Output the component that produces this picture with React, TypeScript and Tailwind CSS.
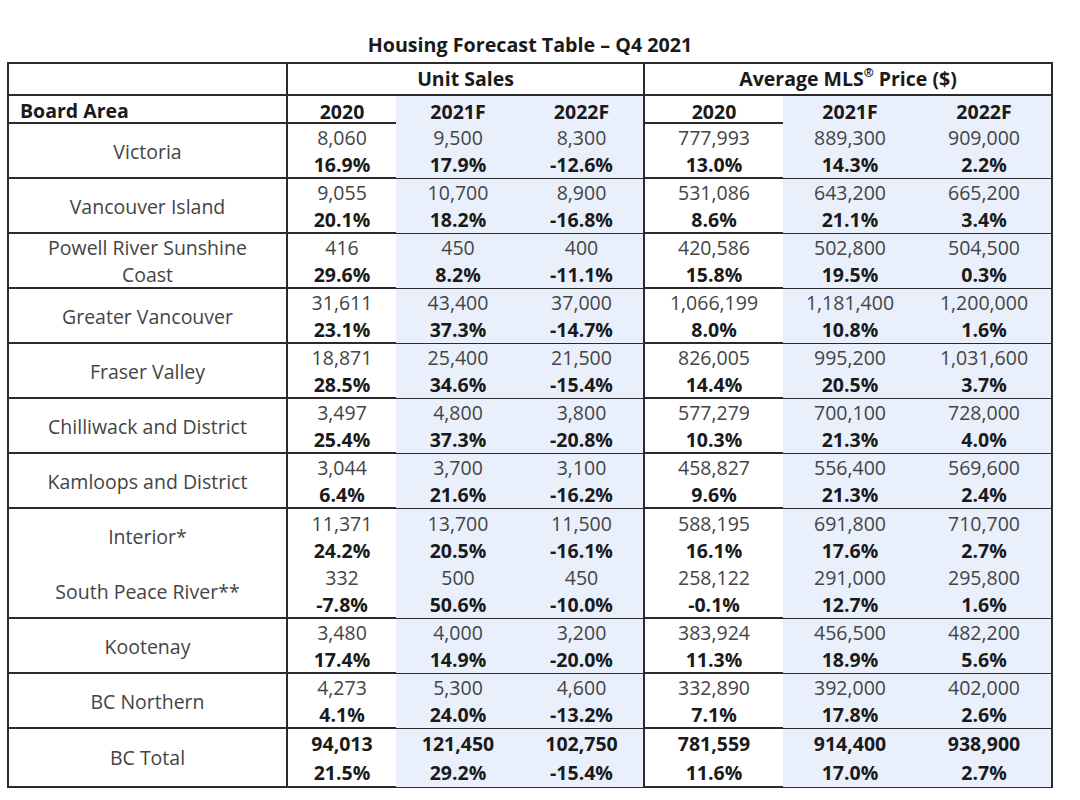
const rows = [
  { name: ["Victoria"], sales: ["8,060", "9,500", "8,300"], salesPct: ["16.9%", "17.9%", "-12.6%"], price: ["777,993", "889,300", "909,000"], pricePct: ["13.0%", "14.3%", "2.2%"] },
  { name: ["Vancouver Island"], sales: ["9,055", "10,700", "8,900"], salesPct: ["20.1%", "18.2%", "-16.8%"], price: ["531,086", "643,200", "665,200"], pricePct: ["8.6%", "21.1%", "3.4%"] },
  { name: ["Powell River Sunshine", "Coast"], sales: ["416", "450", "400"], salesPct: ["29.6%", "8.2%", "-11.1%"], price: ["420,586", "502,800", "504,500"], pricePct: ["15.8%", "19.5%", "0.3%"] },
  { name: ["Greater Vancouver"], sales: ["31,611", "43,400", "37,000"], salesPct: ["23.1%", "37.3%", "-14.7%"], price: ["1,066,199", "1,181,400", "1,200,000"], pricePct: ["8.0%", "10.8%", "1.6%"] },
  { name: ["Fraser Valley"], sales: ["18,871", "25,400", "21,500"], salesPct: ["28.5%", "34.6%", "-15.4%"], price: ["826,005", "995,200", "1,031,600"], pricePct: ["14.4%", "20.5%", "3.7%"] },
  { name: ["Chilliwack and District"], sales: ["3,497", "4,800", "3,800"], salesPct: ["25.4%", "37.3%", "-20.8%"], price: ["577,279", "700,100", "728,000"], pricePct: ["10.3%", "21.3%", "4.0%"] },
  { name: ["Kamloops and District"], sales: ["3,044", "3,700", "3,100"], salesPct: ["6.4%", "21.6%", "-16.2%"], price: ["458,827", "556,400", "569,600"], pricePct: ["9.6%", "21.3%", "2.4%"] },
  { name: ["Interior*"], sales: ["11,371", "13,700", "11,500"], salesPct: ["24.2%", "20.5%", "-16.1%"], price: ["588,195", "691,800", "710,700"], pricePct: ["16.1%", "17.6%", "2.7%"], joined: true },
  { name: ["South Peace River**"], sales: ["332", "500", "450"], salesPct: ["-7.8%", "50.6%", "-10.0%"], price: ["258,122", "291,000", "295,800"], pricePct: ["-0.1%", "12.7%", "1.6%"] },
  { name: ["Kootenay"], sales: ["3,480", "4,000", "3,200"], salesPct: ["17.4%", "14.9%", "-20.0%"], price: ["383,924", "456,500", "482,200"], pricePct: ["11.3%", "18.9%", "5.6%"] },
  { name: ["BC Northern"], sales: ["4,273", "5,300", "4,600"], salesPct: ["4.1%", "24.0%", "-13.2%"], price: ["332,890", "392,000", "402,000"], pricePct: ["7.1%", "17.8%", "2.6%"] },
];

const total = {
  sales: ["94,013", "121,450", "102,750"],
  salesPct: ["21.5%", "29.2%", "-15.4%"],
  price: ["781,559", "914,400", "938,900"],
  pricePct: ["11.6%", "17.0%", "2.7%"],
};

// per value column: blue band on the forecast years, divider after unit sales
const colClass = [
  "",
  "bg-[#e9f0fc]",
  "bg-[#e9f0fc] border-r-2 border-[#2b2b2b]",
  "",
  "bg-[#e9f0fc]",
  "bg-[#e9f0fc]",
];

function Cell({ top, bottom, i, total }: { top: string; bottom: string; i: number; total?: boolean }) {
  return (
    <div className={`flex flex-col items-center justify-center ${colClass[i]}`}>
      <span className={total ? "font-bold text-[#1a1a1a] leading-[29px]" : "text-[#444] leading-[27px]"}>{top}</span>
      <span className={`font-bold text-[#1a1a1a] ${total ? "leading-[29px]" : "leading-[27px]"}`}>{bottom}</span>
    </div>
  );
}

const grid = "grid grid-cols-[279px_108px_124px_125px_138px_134px_134px]";

export default function App() {
  return (
    <div className="min-h-[800px] w-[1080px] bg-white pt-[31px] font-['Open_Sans',sans-serif] text-[19.5px]">
      <div className="ml-[7px] w-[1046px]">
        <div className="h-[27px] text-center text-[19.7px] font-bold leading-[27px] text-[#1a1a1a]">
          Housing Forecast Table – Q4 2021
        </div>
        <div className="mt-[4px] border-2 border-[#2b2b2b]">
          <div className="grid h-[32px] grid-cols-[279px_357px_406px] border-b-2 border-[#2b2b2b] font-bold text-[#1a1a1a]">
            <div className="border-r-2 border-[#2b2b2b]" />
            <div className="flex items-center justify-center border-r-2 border-[#2b2b2b]">Unit Sales</div>
            <div className="flex items-center justify-center">
              Average MLS<sup className="text-[12px]">®</sup>&nbsp;Price ($)
            </div>
          </div>
          <div className={`${grid} h-[28px] border-b-2 border-[#2b2b2b] font-bold text-[#1a1a1a]`}>
            <div className="flex items-center border-r-2 border-[#2b2b2b] pl-[11px] pb-[3px]">Board Area</div>
            {["2020", "2021F", "2022F", "2020", "2021F", "2022F"].map((y, i) => (
              <div key={i} className={`flex items-center justify-center pb-[2px] ${colClass[i]}`}>
                {y}
              </div>
            ))}
          </div>
          {rows.map((r, ri) => (
            <div
              key={ri}
              className={`${grid} h-[55px] ${r.joined ? "" : "border-b-2 border-[#2b2b2b]"}`}
            >
              <div className="flex flex-col items-center justify-center border-r-2 border-[#2b2b2b] text-[#444] leading-[27px]">
                {r.name.map((n) => (
                  <span key={n}>{n}</span>
                ))}
              </div>
              {[0, 1, 2].map((i) => (
                <Cell key={i} i={i} top={r.sales[i]} bottom={r.salesPct[i]} />
              ))}
              {[0, 1, 2].map((i) => (
                <Cell key={i + 3} i={i + 3} top={r.price[i]} bottom={r.pricePct[i]} />
              ))}
            </div>
          ))}
          <div className={`${grid} h-[57px]`}>
            <div className="flex items-center justify-center border-r-2 border-[#2b2b2b] text-[#444]">BC Total</div>
            {[0, 1, 2].map((i) => (
              <Cell key={i} i={i} top={total.sales[i]} bottom={total.salesPct[i]} total />
            ))}
            {[0, 1, 2].map((i) => (
              <Cell key={i + 3} i={i + 3} top={total.price[i]} bottom={total.pricePct[i]} total />
            ))}
          </div>
        </div>
      </div>
    </div>
  );
}
